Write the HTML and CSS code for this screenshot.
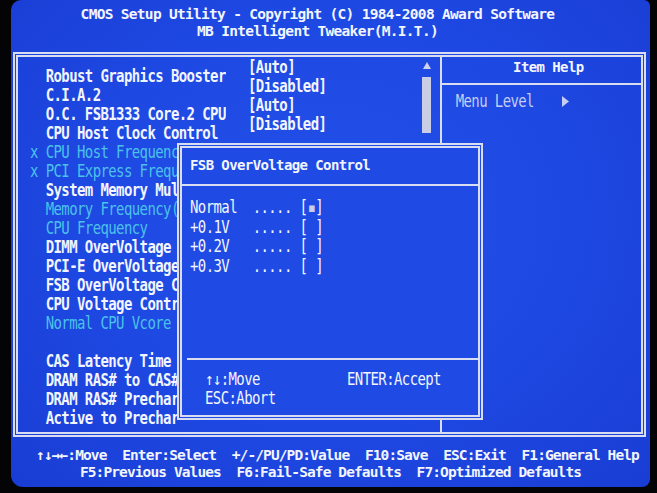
FILE: index.html
```html
<!DOCTYPE html>
<html lang="en">
<head>
    <meta charset="UTF-8">
    <title>CMOS Setup Utility - MB Intelligent Tweaker</title>
    <link rel="stylesheet" href="styles.css">
</head>
<body>

<div class="screen">
    <header class="title">
        <div>CMOS Setup Utility - Copyright (C) 1984-2008 Award Software</div>
        <div>MB Intelligent Tweaker(M.I.T.)</div>
    </header>

    <div class="frame">
        <section class="menu">
            <div class="labels">
                <div class="item">  Robust Graphics Booster</div>
                <div class="item">  C.I.A.2</div>
                <div class="item">  O.C. FSB1333 Core.2 CPU</div>
                <div class="item">  CPU Host Clock Control</div>
                <div class="item off">x CPU Host Frequenc</div>
                <div class="item off">x PCI Express Frequ</div>
                <div class="item">  System Memory Mul</div>
                <div class="item off">  Memory Frequency(</div>
                <div class="item off">  CPU Frequency</div>
                <div class="item">  DIMM OverVoltage</div>
                <div class="item">  PCI-E OverVoltage</div>
                <div class="item">  FSB OverVoltage C</div>
                <div class="item">  CPU Voltage Contr</div>
                <div class="item off">  Normal CPU Vcore</div>
                <div class="item"> </div>
                <div class="item">  CAS Latency Time</div>
                <div class="item">  DRAM RAS# to CAS#</div>
                <div class="item">  DRAM RAS# Prechar</div>
                <div class="item">  Active to Prechar</div>
            </div>
            <div class="values">
                <div class="item">[Auto]</div>
                <div class="item">[Disabled]</div>
                <div class="item">[Auto]</div>
                <div class="item">[Disabled]</div>
            </div>
            <div class="scroll">
                <svg class="scroll-up" width="8" height="7" viewBox="0 0 8 7"><polygon points="4,0 8,7 0,7" fill="#cfd4ea"/></svg>
                <div class="scroll-thumb"></div>
            </div>
        </section>

        <aside class="help">
            <div class="help-title">Item Help</div>
            <div class="help-body">
                <span>Menu Level</span>
                <svg class="level-arrow" width="7" height="11" viewBox="0 0 7 11"><polygon points="0,0 7,5.5 0,11" fill="#c4cdf2"/></svg>
            </div>
        </aside>
    </div>

    <footer class="keys">
        <div class="keys-main">&uarr;&darr;&rarr;&larr;:Move  Enter:Select  +/-/PU/PD:Value  F10:Save  ESC:Exit  F1:General Help</div>
        <div>F5:Previous Values  F6:Fail-Safe Defaults  F7:Optimized Defaults</div>
    </footer>

    <!-- option popup opened over the menu -->
    <div class="dialog">
        <div class="dialog-title">FSB OverVoltage Control</div>
        <div class="options">
            <div class="option">Normal  ..... [<span class="mark">&#9642;</span>]</div>
            <div class="option">+0.1V   ..... [ ]</div>
            <div class="option">+0.2V   ..... [ ]</div>
            <div class="option">+0.3V   ..... [ ]</div>
        </div>
        <div class="dialog-keys">
            <span>&uarr;&darr;:Move</span>
            <span>ENTER:Accept</span>
            <span>ESC:Abort</span>
        </div>
    </div>
</div>

</body>
</html>
```

FILE: styles.css
```css
body {
    margin: 0;
    background-color: #040406;
    font-family: "DejaVu Sans Mono", monospace;
    font-size: 14px;
    letter-spacing: -0.6px;
    color: #f2f5ff;
}

.screen {
    position: relative;
    width: 639px;
    height: 487px;
    margin-left: 11px;
    background: radial-gradient(ellipse at 50% 45%, #2350ea 0%, #1e48e2 55%, #193dd4 100%);
    border-radius: 10px 6px 8px 12px;
    overflow: hidden;
}

/* the BIOS font is taller than it is wide */
.item,
.option,
.dialog-keys span,
.help-body span {
    transform: scaleY(1.2);
}

.title {
    padding: 6px 26px 0 0;
    text-align: center;
    font-weight: bold;
    font-size: 14.5px;
    letter-spacing: -0.7px;
}

.title div,
.keys div {
    height: 17px;
    line-height: 17px;
    white-space: pre;
}

.frame {
    display: flex;
    box-sizing: border-box;
    width: 633px;
    height: 385px;
    margin: 12px 0 0 2px;
    border: 5px double #d9ddf2;
}

/* left side: setting names, values and scroll bar */
.menu {
    display: flex;
    width: 423px;
    padding-left: 12px;
    box-sizing: border-box;
}

.item {
    height: 19px;
    line-height: 19px;
    white-space: pre;
    font-weight: bold;
}

.item.off {
    color: #4bc2ea;
    font-weight: normal;
}

.labels {
    width: 218px;
    padding-top: 10px;
}

.values {
    padding-top: 1px;
}

.scroll {
    display: flex;
    flex-direction: column;
    align-items: center;
    width: 10px;
    margin: 0 8px 0 auto;
    padding-top: 5px;
}

.scroll-thumb {
    width: 9px;
    height: 56px;
    margin-top: 8px;
    background-color: #c9cee4;
}

/* right side: item help */
.help {
    width: 200px;
    border-left: 2px solid #d9ddf2;
}

.help-title {
    height: 26px;
    padding-left: 14px;
    line-height: 20px;
    text-align: center;
    font-weight: bold;
    border-bottom: 2px solid #d9ddf2;
}

.help-body {
    display: flex;
    align-items: center;
    gap: 28px;
    padding: 7px 0 0 14px;
    line-height: 19px;
    color: #c4cdf2;
}

.keys {
    margin-top: 10px;
    text-align: center;
    font-weight: bold;
    font-size: 14.5px;
    letter-spacing: -0.9px;
}

.keys-main {
    padding-left: 14px;
}

/* popup with the choices for one setting */
.dialog {
    position: absolute;
    left: 166px;
    top: 143px;
    width: 306px;
    height: 277px;
    box-sizing: border-box;
    display: flex;
    flex-direction: column;
    border: 5px double #d9ddf2;
    background-color: #1f4ae4;
}

.dialog-title {
    padding: 8px 0 0 8px;
    height: 28px;
    line-height: 19px;
    font-weight: bold;
    border-bottom: 2px solid #d9ddf2;
}

.options {
    flex: 1;
    padding: 12px 0 0 8px;
}

.option {
    height: 19.5px;
    line-height: 19.5px;
    white-space: pre;
}

.mark {
    color: #c9cee4;
}

.dialog-keys {
    display: grid;
    grid-template-columns: 142px auto;
    margin-left: 5px;
    padding: 10px 0 7px 18px;
    line-height: 19px;
    border-top: 2px solid #d9ddf2;
}
```
